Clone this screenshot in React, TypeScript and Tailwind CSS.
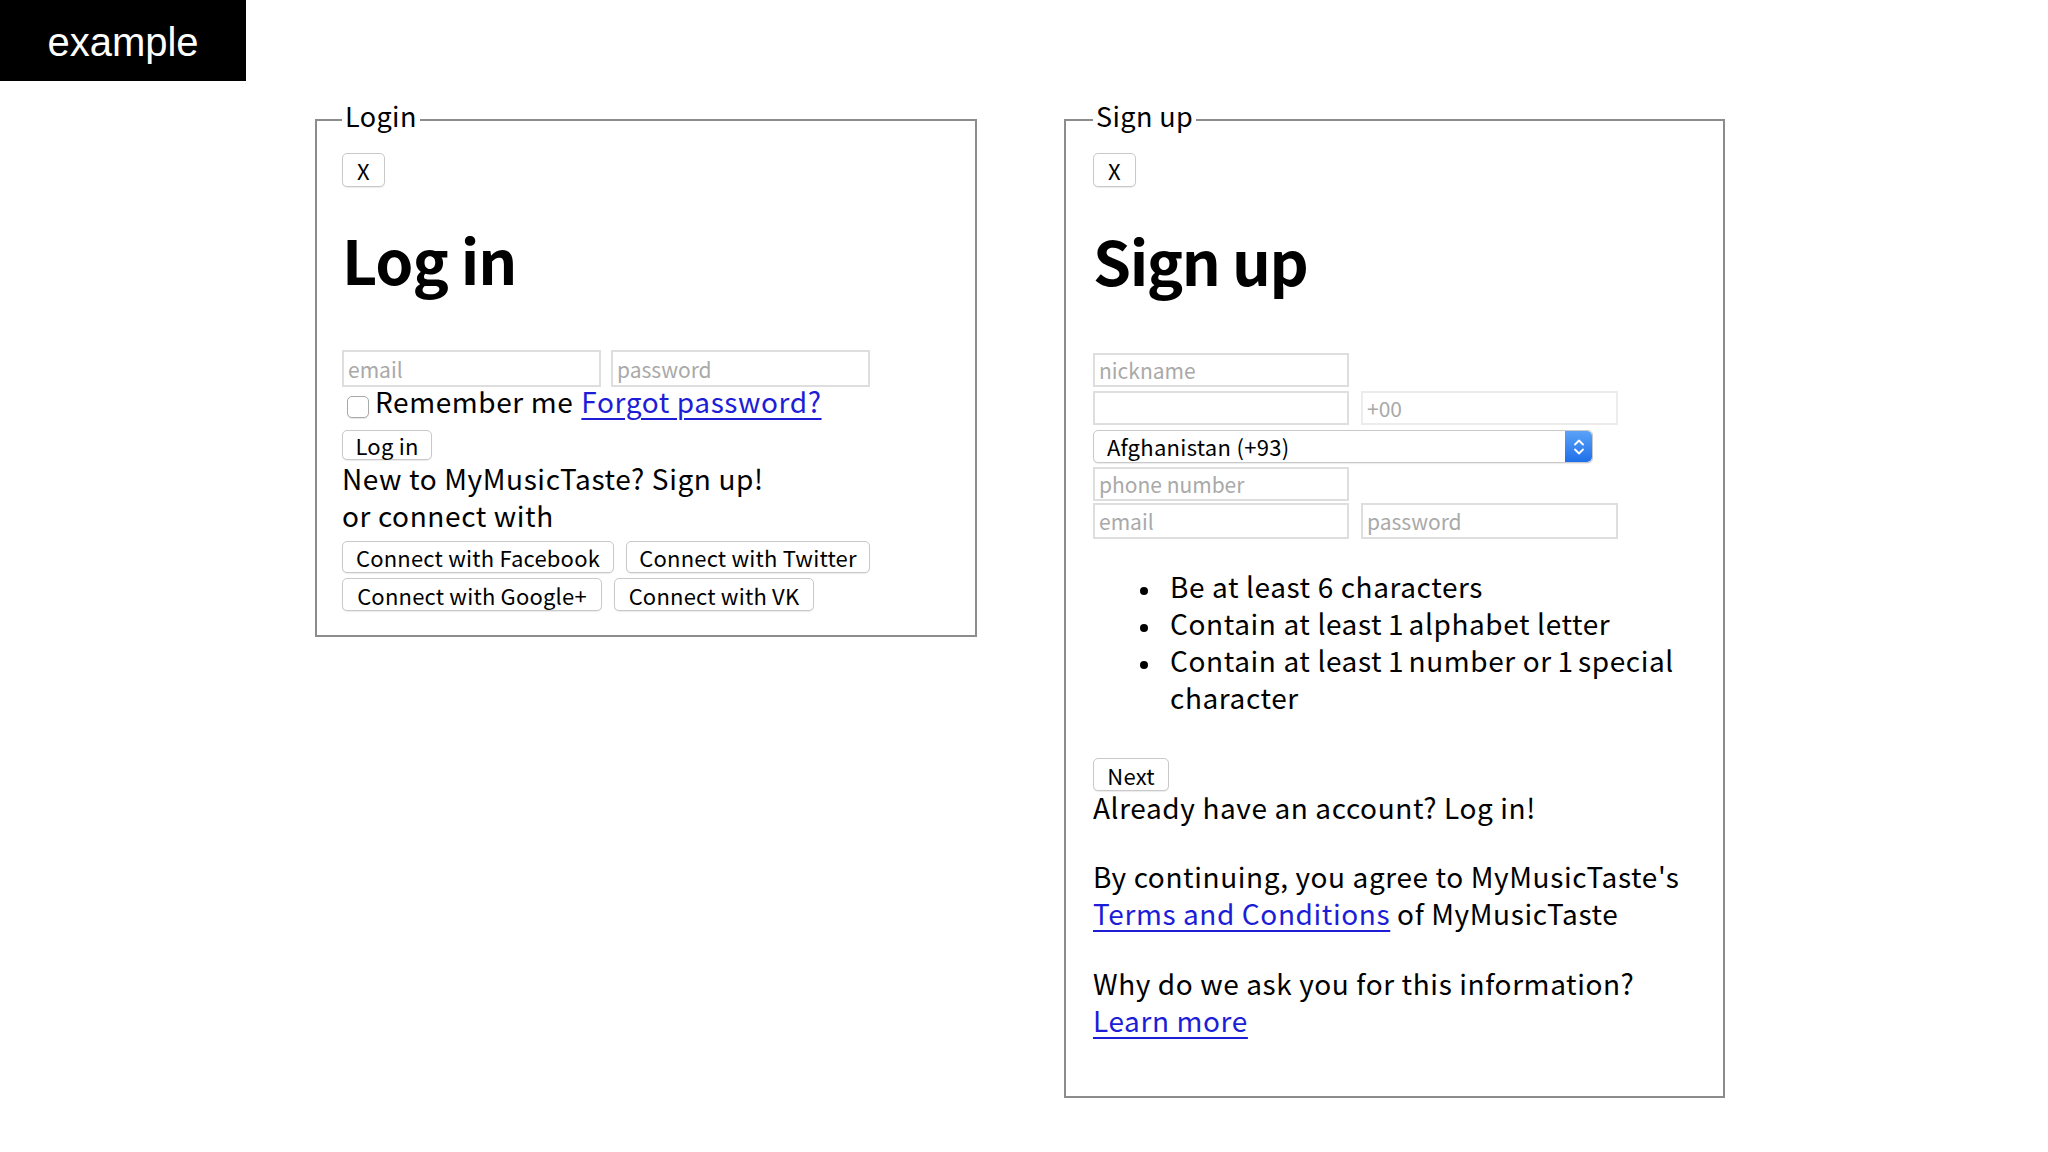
import React from 'react';

const box = "border border-[#c9c9c9] bg-white rounded-[5px] shadow-[0_1px_1px_rgba(0,0,0,0.08)] text-[22px] tracking-[0.2px] leading-none text-black flex items-center justify-center";
const field = "border-2 border-[#dedede] bg-white text-[21px] px-[4px] text-black placeholder:text-[#a9a9a9] outline-none";
const link = "text-[#1d1dd8] underline decoration-[2px] underline-offset-[5px]";
const body = "text-[28px] tracking-[0.6px]";

// digit "1" is wide in this font, the reference has a narrow one
function One() {
  return <span className="ml-[-1px] tracking-[-2px]">1</span>;
}

function Legend({ children }: { children: React.ReactNode }) {
  return <legend className="px-[3px] pb-[8px] text-[27px] leading-[28px] tracking-[0.4px]">{children}</legend>;
}

function CloseButton() {
  return <button type="button" className={`${box} h-[34px] w-[43px]`}>X</button>;
}

function Input({ placeholder, className }: { placeholder?: string; className: string }) {
  return <input placeholder={placeholder} className={`${field} ${className}`} />;
}

function LoginBox() {
  return (
    <fieldset className="w-[662px] border-2 border-[#8c8c8c] px-[25px] pt-[15px] pb-[24px]">
      <Legend>Login</Legend>
      <CloseButton />
      <h1 className="mt-[40px] text-[61px] leading-[64px] font-bold tracking-[-1px]">Log in</h1>
      <div className="mt-[59px] flex gap-[10px]">
        <Input placeholder="email" className="h-[37px] w-[259px]" />
        <Input placeholder="password" className="h-[37px] w-[259px]" />
      </div>
      <div className={`flex items-start leading-[28px] ${body}`}>
        <span className="mt-[9px] ml-[5px] mr-[6px] h-[22px] w-[22px] rounded-[5px] border border-[#a9a9a9] bg-white shadow-[0_1px_1px_rgba(0,0,0,0.1)]" />
        <span>Remember me</span>
        <a href="#" className={`ml-[8px] ${link}`}>Forgot password?</a>
      </div>
      <button type="button" className={`${box} mt-[12px] h-[30px] w-[90px]`}>Log in</button>
      <p className={`leading-[37px] ${body}`}>
        New to MyMusicTaste? Sign up!
        <br />
        or connect with
      </p>
      <div className="mt-[7px] flex gap-[12px]">
        <button type="button" className={`${box} h-[32px] w-[272px]`}>Connect with Facebook</button>
        <button type="button" className={`${box} h-[32px] w-[244px]`}>Connect with Twitter</button>
      </div>
      <div className="mt-[5px] flex gap-[12px]">
        <button type="button" className={`${box} h-[33px] w-[260px]`}>Connect with Google+</button>
        <button type="button" className={`${box} h-[33px] w-[200px]`}>Connect with VK</button>
      </div>
    </fieldset>
  );
}

function SignupBox() {
  return (
    <fieldset className="w-[661px] border-2 border-[#8c8c8c] pl-[27px] pr-[25px] pt-[15px] pb-[57px]">
      <Legend>Sign up</Legend>
      <CloseButton />
      <h1 className="mt-[41px] text-[61px] leading-[64px] font-bold tracking-[-1.4px]">Sign up</h1>
      <Input placeholder="nickname" className="mt-[61px] block h-[34px] w-[256px]" />
      <div className="mt-[4px] flex gap-[12px]">
        <Input className="h-[34px] w-[256px]" />
        <Input placeholder="+00" className="h-[34px] w-[257px] border-[#ececec]" />
      </div>
      <div className="mt-[5px] flex h-[33px] w-[500px] items-stretch rounded-[5px] border border-[#c9c9c9] bg-white shadow-[0_1px_1px_rgba(0,0,0,0.08)]">
        <span className="flex flex-1 items-center pl-[13px] text-[22px] tracking-[0.3px]">Afghanistan (+93)</span>
        <span className="flex w-[27px] items-center justify-center rounded-r-[5px] bg-gradient-to-b from-[#5aa2f8] to-[#1e6fe8]">
          <svg width="12" height="20" viewBox="0 0 12 20" fill="none" stroke="white" strokeWidth="1.8" strokeLinecap="round" strokeLinejoin="round">
            <path d="M2 7.5 6 3.5 10 7.5" />
            <path d="M2 12.5 6 16.5 10 12.5" />
          </svg>
        </span>
      </div>
      <Input placeholder="phone number" className="mt-[4px] block h-[34px] w-[256px]" />
      <div className="mt-[2px] flex gap-[12px]">
        <Input placeholder="email" className="h-[36px] w-[256px]" />
        <Input placeholder="password" className="h-[36px] w-[257px]" />
      </div>
      <ul className={`mt-[29px] leading-[37px] ${body}`}>
        <li className="flex items-start">
          <span className="ml-[47px] mt-[19px] h-[8px] w-[8px] rounded-full bg-black" />
          <span className="ml-[22px] whitespace-nowrap">Be at least 6 characters</span>
        </li>
        <li className="flex items-start">
          <span className="ml-[47px] mt-[19px] h-[8px] w-[8px] rounded-full bg-black" />
          <span className="ml-[22px] whitespace-nowrap">
            Contain at least <One /> alphabet letter
          </span>
        </li>
        <li className="flex items-start">
          <span className="ml-[47px] mt-[19px] h-[8px] w-[8px] rounded-full bg-black" />
          <span className="ml-[22px] whitespace-nowrap">
            Contain at least <One /> number or <One /> special
            <br />
            character
          </span>
        </li>
      </ul>
      <button type="button" className={`${box} mt-[42px] h-[33px] w-[76px]`}>Next</button>
      <p className={`leading-[33px] ${body}`}>Already have an account? Log in!</p>
      <p className={`mt-[34px] leading-[37px] ${body}`}>
        By continuing, you agree to MyMusicTaste's
        <br />
        <a href="#" className={link}>Terms and Conditions</a> of MyMusicTaste
      </p>
      <p className={`mt-[33px] leading-[37px] ${body}`}>
        Why do we ask you for this information?
        <br />
        <a href="#" className={link}>Learn more</a>
      </p>
    </fieldset>
  );
}

export default function App() {
  return (
    <div className="min-h-screen bg-white text-black font-['Noto_Sans_CJK_KR',sans-serif]">
      <div className="flex h-[81px] w-[246px] items-center justify-center bg-black pt-[2px] text-[40px] text-white font-['Liberation_Sans',sans-serif]">
        example
      </div>
      <div className="mt-[21px] flex items-start gap-[87px] pl-[315px]">
        <LoginBox />
        <SignupBox />
      </div>
    </div>
  );
}
